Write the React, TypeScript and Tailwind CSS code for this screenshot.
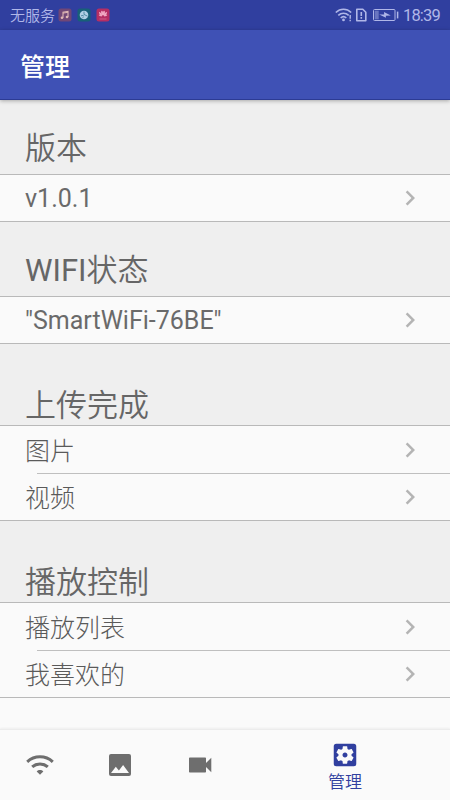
import type { ReactNode } from "react";
import { MdChevronRight, MdSettingsApplications } from "react-icons/md";

type Section = {
  title: string;
  // latin text in front of the title, drawn a bit heavier
  prefix?: string;
  // height of the grey header above the rows
  headerClass: string;
  rows: string[];
};

const sections: Section[] = [
  { title: "版本", headerClass: "h-[74px] pb-[6px]", rows: ["v1.0.1"] },
  { title: "状态", prefix: "WIFI", headerClass: "h-[74px] pb-[6px]", rows: ['"SmartWiFi-76BE"'] },
  { title: "上传完成", headerClass: "h-[81px]", rows: ["图片", "视频"] },
  { title: "播放控制", headerClass: "h-[81px]", rows: ["播放列表", "我喜欢的"] },
];

function StatusBar() {
  return (
    <div className="flex h-[30px] shrink-0 items-center bg-[#303f9f] pr-[10px] pl-[10px] text-[#b0b7e8]">
      <span className="pt-[2px] text-[15px] leading-[28px] font-[350]">无服务</span>

      {/* notification icons */}
      <div className="ml-[3px] flex gap-[5px]">
        <svg width="14" height="14" viewBox="0 0 14 14">
          <rect x="0.5" y="0.5" width="13" height="13" rx="2.5" fill="#704777" />
          <path d="M5 9.8V4.1l5-.8V9" fill="none" stroke="#dfb7b5" strokeWidth="1.1" />
          <path d="M5 5.1l5-.8" stroke="#dfb7b5" strokeWidth="1" />
          <circle cx="4" cy="9.8" r="1.3" fill="#dfb7b5" />
          <circle cx="9" cy="9" r="1.3" fill="#dfb7b5" />
        </svg>
        <svg width="14" height="14" viewBox="0 0 14 14">
          <rect x="0.5" y="0.5" width="13" height="13" rx="2.5" fill="#176078" />
          <circle cx="7" cy="7" r="4.3" fill="#b1d0e5" />
          <path d="M7 3.6v2.8l3.6 1.8M4 7.8l2.6-.4M5.4 9.8l1.4-1" fill="none" stroke="#287089" strokeWidth="0.7" />
        </svg>
        <svg width="14" height="14" viewBox="0 0 14 14">
          <rect x="0.5" y="0.5" width="13" height="13" rx="2.5" fill="#b52e64" />
          <g fill="#f1a9c3">
            <ellipse cx="6.1" cy="5.2" rx="1" ry="2.4" transform="rotate(-8 6.1 5.2)" />
            <ellipse cx="7.9" cy="5.2" rx="1" ry="2.4" transform="rotate(8 7.9 5.2)" />
            <ellipse cx="4.6" cy="6" rx="0.9" ry="2.4" transform="rotate(-35 4.6 6)" />
            <ellipse cx="9.4" cy="6" rx="0.9" ry="2.4" transform="rotate(35 9.4 6)" />
            <ellipse cx="4.3" cy="7.5" rx="0.7" ry="1.7" transform="rotate(-60 4.3 7.5)" />
            <ellipse cx="9.7" cy="7.5" rx="0.7" ry="1.7" transform="rotate(60 9.7 7.5)" />
          </g>
          <path d="M3.5 11h7" stroke="#d66a93" strokeWidth="0.8" />
        </svg>
      </div>

      {/* wifi, sim alert, battery */}
      <svg className="ml-auto" width="64" height="16" viewBox="0 0 64 16" fill="none" stroke="currentColor">
        <path d="M.8 5.5C5.3 1.2 11.7 1.2 16.2 5.5M3.3 8.4c3-2.8 7.4-2.8 10.4 0M5.7 11c1.6-1.5 4-1.5 5.6 0" strokeWidth="1.6" />
        <circle cx="8.5" cy="12.9" r="1.4" fill="currentColor" stroke="none" />
        <path d="M15.2 8v3.7M15.2 12.7v1.6" strokeWidth="1.4" />
        <path d="M21.8 2.2h6l3 3v8.6h-9z" strokeWidth="1.6" strokeLinejoin="round" />
        <path d="M26.3 5v4M26.3 10v1.8" strokeWidth="1.6" />
        <rect x="38.5" y="2.5" width="21.5" height="11" rx="1" strokeWidth="1" />
        <rect x="39.7" y="3.7" width="4" height="8.6" fill="currentColor" stroke="none" opacity="0.45" />
        <path d="M44.2 7.6l5-.1-.2-2.6 6.8 3.6-5 .2.2 2z" fill="currentColor" stroke="none" />
        <path d="M62.6 4.6v6.8" strokeWidth="1.5" />
      </svg>
      <span className="ml-[4px] pt-[2px] text-[16.5px] leading-[28px] tracking-[-0.8px]">18:39</span>
    </div>
  );
}

function ListRow({ label, first, last }: { label: string; first: boolean; last: boolean }) {
  // version and ssid are plain latin text
  const isLatin = /^[\x20-\x7e]+$/.test(label);

  return (
    <>
      {!first && <div className="ml-[37px] h-px bg-[#bfbfbf]" />}
      <div className={`flex items-center justify-between pr-[25px] pl-[25px] ${last ? "h-[46px]" : "h-[47px]"}`}>
        <span
          className={`text-[25px] whitespace-nowrap ${
            isLatin
              ? "pt-[2px] leading-[44px] font-normal text-[#6a6a6a]"
              : "pt-[4px] leading-[42px] font-light text-[#5a5a5a]"
          }`}
        >
          {label}
        </span>
        <MdChevronRight size={30} className="text-[#b4b4b4]" />
      </div>
    </>
  );
}

function NavItem({ children }: { children: ReactNode }) {
  return <button className="flex h-full w-[80px] items-center justify-center text-[#6e6e6e]">{children}</button>;
}

function BottomNav() {
  return (
    <nav className="flex h-[71px] shrink-0 border-t border-[#ececec] bg-[#fafafa] shadow-[0_-1px_2px_rgba(0,0,0,0.05)]">
      <NavItem>
        <svg width="30" height="30" viewBox="0 0 30 30" fill="none" stroke="currentColor">
          <path d="M2.2 11.8C9.5 5.2 20.5 5.2 27.8 11.8" strokeWidth="3" />
          <path d="M7.2 16.9c4.4-4 11.2-4 15.6 0" strokeWidth="3" />
          <path d="M11.7 21.4c1.8-1.8 4.8-1.8 6.6 0L15 24.8z" fill="currentColor" stroke="none" />
        </svg>
      </NavItem>
      <NavItem>
        <svg width="30" height="30" viewBox="0 0 30 30">
          <rect x="4" y="4" width="22" height="22" rx="2" fill="currentColor" />
          <path d="M6 23l4.8-6.3 3.1 3.7 4.2-5.5L24 23z" fill="#fafafa" />
        </svg>
      </NavItem>
      <NavItem>
        <svg width="30" height="30" viewBox="0 0 30 30" fill="currentColor">
          <path d="M4.8 7.5h15.4q.8 0 .8.8v4.8l5.3-5.3v14.4L21 17v4.7q0 .8-.8.8H4.8q-.8 0-.8-.8V8.3q0-.8.8-.8z" />
        </svg>
      </NavItem>
      <button className="flex flex-1 flex-col items-center pt-[10px] text-[#303f9f]">
        <MdSettingsApplications size={30} />
        <span className="pt-px text-[17px] leading-[22px] font-[350]">管理</span>
      </button>
    </nav>
  );
}

export default function App() {
  return (
    <div className="flex h-[800px] w-[450px] flex-col overflow-hidden bg-[#fafafa] font-['Roboto','Noto_Sans_CJK_SC',sans-serif]">
      <StatusBar />
      <header className="z-10 flex h-[70px] shrink-0 items-center border-b border-[#2c3b94] bg-[#3f51b5] pl-[20px] shadow-[0_1px_4px_rgba(0,0,0,0.3)]">
        <h1 className="pt-[6px] text-[25px] leading-[63px] font-medium text-white">管理</h1>
      </header>

      <main className="flex-1">
        {sections.map((section) => (
          <section key={section.title}>
            <h2
              className={`flex items-end bg-[#efefef] pl-[25px] text-[31px] leading-[38px] font-[350] text-[#666666] ${section.headerClass}`}
            >
              {section.prefix && <span className="font-normal">{section.prefix}</span>}
              {section.title}
            </h2>
            <div className="border-y border-[#b9b9b9]">
              {section.rows.map((row, i) => (
                <ListRow key={row} label={row} first={i === 0} last={i === section.rows.length - 1} />
              ))}
            </div>
          </section>
        ))}
      </main>

      <BottomNav />
    </div>
  );
}
